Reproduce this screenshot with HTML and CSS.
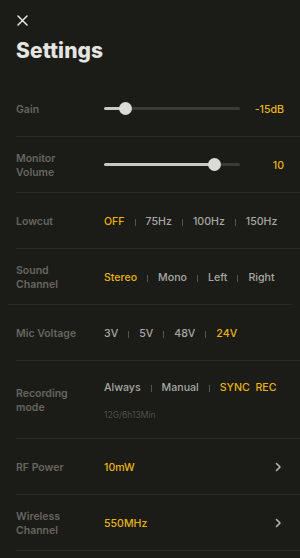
FILE: index.html
```html
<!DOCTYPE html>
<html>
<head>
<meta charset="utf-8">
<link rel="stylesheet" href="styles.css">
</head>
<body>
<div class="page">
  <header class="header">
    <svg class="close" width="11" height="11" viewBox="0 0 11 11"><path d="M1 1L10 10M10 1L1 10" stroke="#e6e6e2" stroke-width="1.5" stroke-linecap="round"/></svg>
    <h1 class="title">Settings</h1>
  </header>

  <div class="row">
    <div class="label">Gain</div>
    <div class="content">
      <div class="slider"><div class="fill" style="width:21px"></div><div class="thumb"></div><div class="rest"></div></div>
      <div class="value">-15dB</div>
    </div>
  </div>
  <div class="divider"></div>

  <div class="row">
    <div class="label">Monitor<br>Volume</div>
    <div class="content">
      <div class="slider"><div class="fill" style="width:110px"></div><div class="thumb"></div><div class="rest"></div></div>
      <div class="value">10</div>
    </div>
  </div>
  <div class="divider"></div>

  <div class="row">
    <div class="label">Lowcut</div>
    <div class="content options">
      <span class="opt on">OFF</span><span class="sep"></span><span class="opt">75Hz</span><span class="sep"></span><span class="opt">100Hz</span><span class="sep"></span><span class="opt">150Hz</span>
    </div>
  </div>
  <div class="divider"></div>

  <div class="row">
    <div class="label">Sound<br>Channel</div>
    <div class="content options">
      <span class="opt on">Stereo</span><span class="sep"></span><span class="opt">Mono</span><span class="sep"></span><span class="opt">Left</span><span class="sep"></span><span class="opt">Right</span>
    </div>
  </div>
  <div class="divider offset"></div>

  <div class="row">
    <div class="label">Mic Voltage</div>
    <div class="content options">
      <span class="opt">3V</span><span class="sep"></span><span class="opt">5V</span><span class="sep"></span><span class="opt">48V</span><span class="sep"></span><span class="opt on">24V</span>
    </div>
  </div>
  <div class="divider"></div>

  <div class="row tall">
    <div class="label">Recording<br>mode</div>
    <div class="content stack">
      <div class="options">
        <span class="opt">Always</span><span class="sep"></span><span class="opt">Manual</span><span class="sep"></span><span class="opt on">SYNC&nbsp;&nbsp;REC</span>
      </div>
      <div class="sub">12G/6h13Min</div>
    </div>
  </div>
  <div class="divider"></div>

  <div class="row">
    <div class="label">RF Power</div>
    <div class="content link">
      <span class="opt on">10mW</span>
      <svg class="chev" width="7" height="10" viewBox="0 0 7 10"><path d="M1.5 1.5L5 5L1.5 8.5" fill="none" stroke="#b8b8b2" stroke-width="1.6" stroke-linecap="round" stroke-linejoin="round"/></svg>
    </div>
  </div>
  <div class="divider"></div>

  <div class="row">
    <div class="label">Wireless<br>Channel</div>
    <div class="content link">
      <span class="opt on">550MHz</span>
      <svg class="chev" width="7" height="10" viewBox="0 0 7 10"><path d="M1.5 1.5L5 5L1.5 8.5" fill="none" stroke="#b8b8b2" stroke-width="1.6" stroke-linecap="round" stroke-linejoin="round"/></svg>
    </div>
  </div>
  <div class="divider"></div>
</div>
</body>
</html>
```
FILE: styles.css
```css
html, body {
  margin: 0;
  padding: 0;
  background: #1b1b18;
}
.page {
  width: 300px;
  height: 558px;
  overflow: hidden;
  font-family: Inter, "Noto Sans", sans-serif;
  color: #a6a6a0;
}
.header {
  height: 81px;
  padding: 15px 0 0 17px;
  box-sizing: border-box;
  display: flex;
  flex-direction: column;
}
.close { display: block; }
.title {
  margin: 12px 0 0 -1px;
  font-size: 21px;
  line-height: 26px;
  font-weight: 800;
  color: #e4e4e0;
  letter-spacing: 0.1px;
}
.row {
  height: 55px;
  display: flex;
  align-items: center;
  padding-left: 16px;
}
.row.tall { height: 77px; }
.label {
  width: 88px;
  flex: none;
  font-size: 10.5px;
  line-height: 14.5px;
  font-weight: 600;
  color: #66665f;
  padding-top: 3px;
}
.content {
  flex: 1;
  display: flex;
  align-items: center;
  padding-right: 16px;
}
.options {
  display: flex;
  align-items: center;
  line-height: 14px;
}
.opt {
  color: #a8a8a2;
  font-weight: 500;
  font-size: 10.6px;
  line-height: 14px;
  padding-top: 3px;
}
.opt.on { color: #e7b40e; }
.sep {
  width: 1px;
  height: 7px;
  background: #55554f;
  margin: 3px 10px 0;
}
.stack {
  flex-direction: column;
  align-items: flex-start;
}
.sub {
  margin-top: 15px;
  font-size: 8.5px;
  line-height: 11px;
  color: #50504b;
}
.slider {
  width: 136px;
  height: 13px;
  display: flex;
  align-items: center;
}
.fill {
  height: 3px;
  background: #c9c9c3;
  border-radius: 2px 0 0 2px;
  margin-right: -6px;
}
.thumb {
  width: 13px;
  height: 13px;
  border-radius: 50%;
  background: #dadad6;
  flex: none;
  position: relative;
  z-index: 1;
}
.rest {
  flex: 1;
  height: 3px;
  background: #3a3a36;
  border-radius: 0 2px 2px 0;
  margin-left: -6px;
}
.value {
  flex: 1;
  text-align: right;
  font-size: 10.6px;
  color: #e7b40e;
  font-weight: 500;
  padding-top: 1px;
}
.link { justify-content: space-between; padding-right: 18px; }
.chev { margin-top: 1px; }
.divider {
  height: 1px;
  background: #2a2a27;
  margin-left: 16px;
}
.divider.offset { margin: 0 8px; }
```
